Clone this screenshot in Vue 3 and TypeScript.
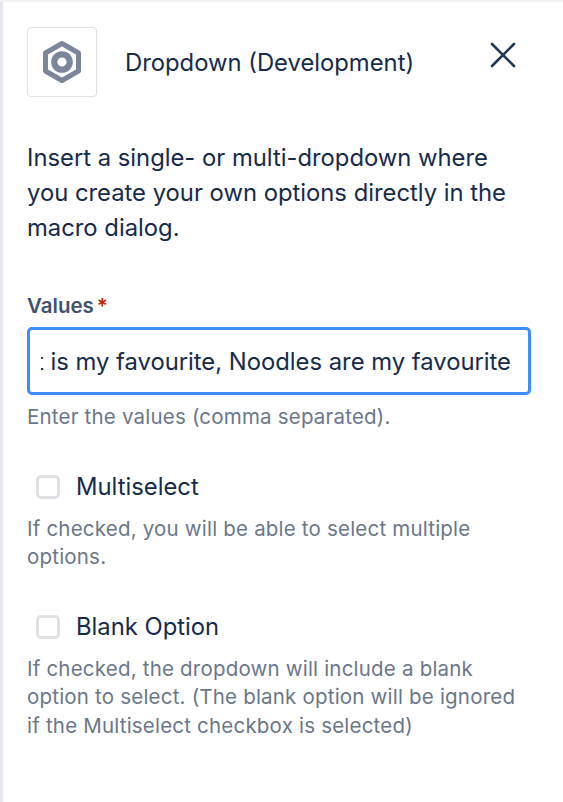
<script setup lang="ts">
const title = 'Dropdown (Development)'
const options = [
  { label: 'Multiselect', help: 'If checked, you will be able to select multiple options.' },
  { label: 'Blank Option', help: 'If checked, the dropdown will include a blank option to select. (The blank option will be ignored if the Multiselect checkbox is selected)' },
]
</script>

<template>
  <div class="frame">
    <aside class="panel">
      <header class="head">
        <div class="logo">
          <svg width="40" height="44" viewBox="0 0 40 44" fill="none">
            <path d="M20 3.5 L36.5 13 V31 L20 40.5 L3.5 31 V13 Z" stroke="#7A869A" stroke-width="5" stroke-linejoin="round" />
            <circle cx="20" cy="22" r="7.7" stroke="#7A869A" stroke-width="6.2" />
          </svg>
        </div>
        <h1 class="title">{{ title }}</h1>
        <button class="close" aria-label="Close">
          <svg width="26" height="26" viewBox="0 0 26 26" fill="none">
            <path d="M2 2 L24 24 M24 2 L2 24" stroke="#1F3759" stroke-width="2.6" stroke-linecap="round" />
          </svg>
        </button>
      </header>

      <p class="intro">Insert a single- or multi-dropdown where you create your own options directly in the macro dialog.</p>

      <label class="label">Values<span class="req">*</span></label>
      <div class="input"><div class="clip"><span class="value">Dessert is my favourite, Noodles are my favourite</span></div></div>
      <p class="help first">Enter the values (comma separated).</p>

      <section v-for="o in options" :key="o.label" class="option">
        <div class="check">
          <span class="box"></span>
          <span class="check-label">{{ o.label }}</span>
        </div>
        <p class="help">{{ o.help }}</p>
      </section>
    </aside>
  </div>
</template>

<style>
html, body { margin: 0; background: #fff; }
</style>

<style scoped>
.frame {
  width: 563px;
  height: 802px;
  box-sizing: border-box;
  overflow: hidden;
  background: #fff;
  font-family: Inter, "Liberation Sans", sans-serif;
  border-top: 2px solid #f0f2f5;
}
.panel {
  height: 100%;
  box-sizing: border-box;
  border-left: 3px solid #e4e8ee;
  padding: 25px 32px 0 24px;
}
.head {
  display: flex;
  align-items: center;
  height: 70px;
}
.logo {
  width: 70px;
  height: 70px;
  box-sizing: border-box;
  border: 1px solid #dfe1e6;
  border-radius: 4px;
  display: flex;
  align-items: center;
  justify-content: center;
  flex: none;
}
.title {
  margin: 0 0 0 28px;
  font-size: 23.8px;
  font-weight: 400;
  color: #172b4d;
  white-space: nowrap;
  flex: 1;
}
.close {
  border: 0;
  background: none;
  padding: 0;
  display: flex;
  margin-top: -14px;
  margin-right: 15px;
}
.intro {
  margin: 43px 0 0;
  font-size: 23.8px;
  line-height: 35px;
  color: #172b4d;
}
.label {
  display: block;
  margin-top: 48px;
  font-size: 20.5px;
  line-height: 26px;
  font-weight: 600;
  color: #42526e;
}
.req {
  color: #bf2600;
  margin-left: 3px;
}
.input {
  margin-top: 8px;
  width: 504px;
  height: 68px;
  box-sizing: border-box;
  border: 3px solid #3f8cff;
  border-radius: 5px;
  padding: 0 17px 0 11px;
  display: flex;
  align-items: center;
  white-space: nowrap;
  font-size: 23.8px;
  color: #172b4d;
}
.clip {
  flex: 1;
  min-width: 0;
  display: flex;
  justify-content: flex-end;
  overflow: hidden;
}
.value { flex: none; }
.help {
  margin: 0;
  font-size: 20.5px;
  letter-spacing: 0.2px;
  line-height: 28.5px;
  color: #6b778c;
}
.help.first { margin-top: 8px; }
.option { margin-top: 37px; }
.option + .option { margin-top: 37px; }
.check {
  display: flex;
  align-items: center;
  height: 36px;
  padding-left: 9px;
}
.box {
  width: 24px;
  height: 24px;
  box-sizing: border-box;
  border: 3px solid #dfe1e6;
  border-radius: 5px;
  background: #fff;
  flex: none;
}
.check-label {
  margin-left: 16px;
  font-size: 23.8px;
  color: #172b4d;
}
.option .help { margin-top: 10px; }
</style>
